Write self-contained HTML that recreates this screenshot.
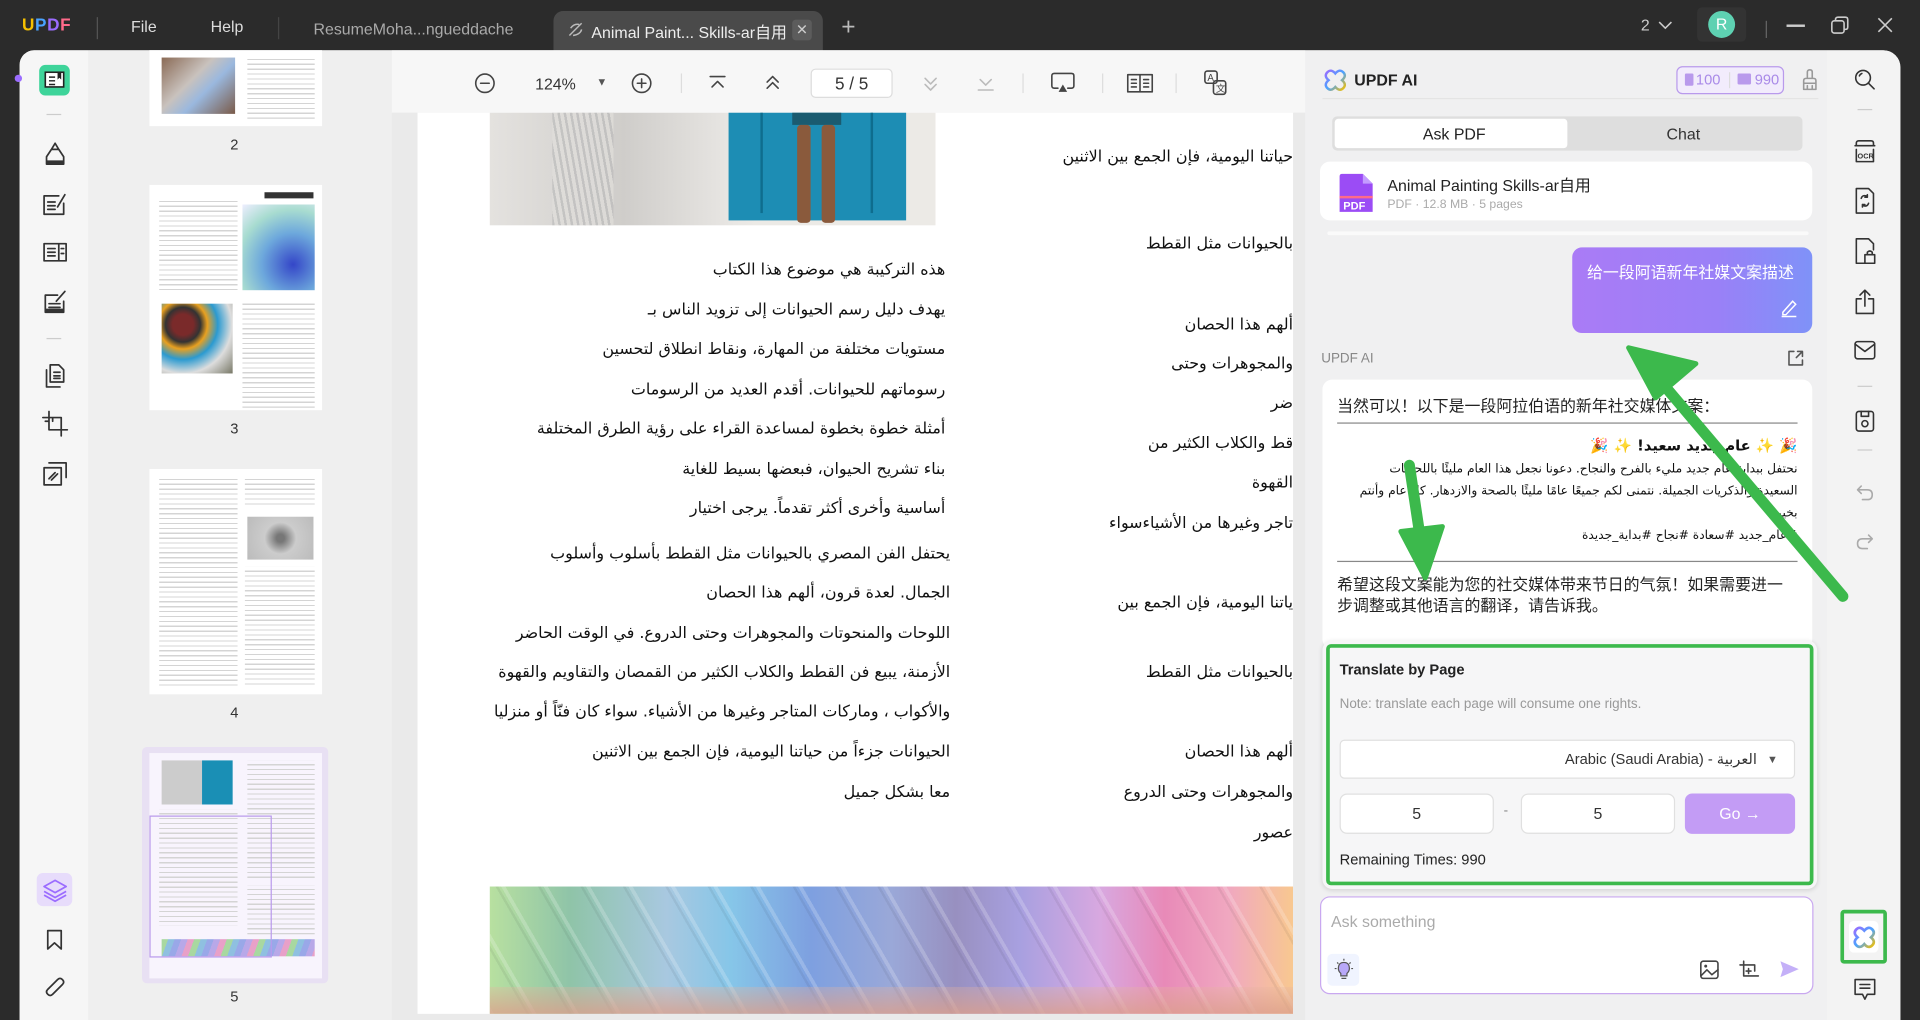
<!DOCTYPE html>
<html><head><meta charset="utf-8"><style>
*{box-sizing:border-box;margin:0;padding:0}
html,body{width:1920px;height:1020px;overflow:hidden;background:#2b2b2b;font-family:"Liberation Sans","Noto Sans CJK SC",sans-serif}
#s{position:absolute;left:0;top:0;width:1568px;height:833px;transform:scale(1.22449);transform-origin:0 0;background:#2b2b2b}
.a{position:absolute}
.t{position:absolute;white-space:nowrap}
svg{position:absolute;overflow:visible}
.ic{fill:none;stroke:#555;stroke-width:1.4;stroke-linecap:round;stroke-linejoin:round}
.ar{font-family:"DejaVu Sans",sans-serif;direction:rtl;font-size:13px;color:#111}
.rt{fill:none;stroke:#666;stroke-width:1.3;stroke-linecap:round;stroke-linejoin:round}
.ln{background:repeating-linear-gradient(#fff 0 3px,#d4d4d4 3px 4px)}
</style></head><body><div id="s">
<div class="t" style="left:18px;top:12px;font-size:14px;font-weight:bold;letter-spacing:0.5px"><span style="color:#f5c000">U</span><span style="color:#4aa3ff">P</span><span style="color:#9b6cff">D</span><span style="color:#ff6a8a">F</span></div>
<div class="a" style="left:79px;top:14px;width:1px;height:18px;background:#555"></div>
<div class="t" style="left:107px;top:14px;font-size:13px;color:#ddd">File</div>
<div class="t" style="left:172px;top:14px;font-size:13px;color:#ddd">Help</div>
<div class="a" style="left:227px;top:14px;width:1px;height:18px;background:#444"></div>
<div class="t" style="left:256px;top:16px;font-size:13px;color:#aaa">ResumeMoha...ngueddache</div>
<div class="a" style="left:452px;top:9px;width:220px;height:33px;background:#4a4a4a;border-radius:8px 8px 0 0"></div>
<svg style="left:463px;top:17px" width="14" height="14"><path d="M2 12 L12 2 M3 6 Q6 2 10 3 M5 12 Q11 11 12 7" stroke="#bbb" fill="none" stroke-width="1.2"/></svg>
<div class="t" style="left:483px;top:16px;font-size:13px;color:#eee">Animal Paint... Skills-ar自用</div>
<div class="a" style="left:647px;top:16px;width:16px;height:17px;background:#5c5c5c;border-radius:3px;color:#ccc;font-size:12px;text-align:center;line-height:17px">✕</div>
<div class="t" style="left:687px;top:11px;font-size:20px;color:#bbb;font-weight:300">+</div>
<div class="t" style="left:1340px;top:13px;font-size:13px;color:#ccc">2</div>
<svg style="left:1354px;top:17px" width="12" height="8"><path d="M1 1 L6 6 L11 1" stroke="#ccc" fill="none" stroke-width="1.3"/></svg>
<div class="a" style="left:1386px;top:6px;width:40px;height:28px;background:#333;border-radius:4px"></div>
<div class="a" style="left:1395px;top:9px;width:22px;height:22px;background:#5ed1b2;border-radius:50%;color:#fff;font-size:13px;text-align:center;line-height:22px">R</div>
<div class="a" style="left:1442px;top:17px;width:1px;height:14px;background:#666"></div>
<div class="a" style="left:1459px;top:20px;width:15px;height:1.5px;background:#ccc"></div>
<svg style="left:1495px;top:13px" width="16" height="16"><rect x="1" y="4" width="10" height="10" rx="2" stroke="#ccc" fill="none" stroke-width="1.3"/><path d="M4 4 V3 Q4 1 6 1 H12 Q14 1 14 3 V9 Q14 11 12 11 H11" stroke="#ccc" fill="none" stroke-width="1.3"/></svg>
<svg style="left:1533px;top:14px" width="13" height="13"><path d="M1 1 L12 12 M12 1 L1 12" stroke="#ccc" stroke-width="1.3"/></svg>

<div class="a" style="left:16px;top:41px;width:1536px;height:792px;background:#f4f4f4;border-radius:12px 14px 0 0;overflow:hidden">
 <div class="a" style="left:0;top:0;width:56px;height:792px;background:#f6f6f6"></div>
 <div class="a" style="left:56px;top:0;width:248px;height:792px;background:#efefef"></div>
 <div class="a" style="left:304px;top:0;width:746px;height:792px;background:#eaeaea"></div>
 <div class="a" style="left:304px;top:0;width:746px;height:51px;background:#f7f7f7"></div>
 <div class="a" style="left:1050px;top:0;width:426px;height:792px;background:#f0f0f1"></div>
 <div class="a" style="left:1476px;top:0;width:60px;height:792px;background:#f3f3f3"></div>
</div>
<div class="a" style="left:12px;top:61px;width:6px;height:6px;border-radius:50%;background:#9b6cff"></div>

<div class="a" style="left:32px;top:53px;width:25px;height:25px;background:#3ed49a;border-radius:5px"></div>
<svg style="left:36px;top:58px" width="17" height="15"><rect x="1" y="1" width="15" height="12" fill="#fff" stroke="#222" stroke-width="1.3"/><path d="M4 5 H9 M4 8 H9 M4 11 H9" stroke="#222" stroke-width="1.2"/><path d="M11 1 V7 L12.5 5.5 L14 7 V1" fill="#222"/></svg>
<div class="a" style="left:38px;top:93px;width:12px;height:1px;background:#ccc"></div>
<div class="a" style="left:38px;top:276px;width:12px;height:1px;background:#ccc"></div>
<svg style="left:33px;top:114px" width="24" height="24"><path class="ic" style="stroke:#333" d="M5 20 V14 L9 8 H15 L19 14 V20 Z M9 8 L12 3 L15 8"/><path d="M5 17 H19 V20 H5Z" fill="#333"/></svg>
<svg style="left:33px;top:155px" width="24" height="24"><path class="ic" style="stroke:#333" d="M3 5 H15 M3 5 V20 H19 V11 M6 10 H12 M6 13 H12 M6 16 H12 M14 14 L20 4"/></svg>
<svg style="left:33px;top:194px" width="24" height="24"><path class="ic" style="stroke:#333" d="M3 5 H21 V19 H3 Z M6 9 H12 M6 12 H12 M6 15 H12 M15 5 V19 M17 9 H19 M17 13 H19"/></svg>
<svg style="left:33px;top:235px" width="24" height="24"><path class="ic" style="stroke:#333" d="M4 6 H14 M4 6 V20 H19 V11 M7 13 H16 M7 16 H16 M13 11 L20 3"/><path d="M4 17 H19 V20 H4Z" fill="#333"/></svg>
<svg style="left:33px;top:295px" width="24" height="24"><path class="ic" style="stroke:#333" d="M8 3 H15 L19 7 V17 H8 Z M5 7 V21 H16 M11 9 H16 M11 12 H16 M11 14 H16"/></svg>
<svg style="left:33px;top:334px" width="24" height="24"><path class="ic" style="stroke:#333" d="M7 2 V17 H22 M2 7 H17 V22 M10 7 V10 M7 10 H4"/></svg>
<svg style="left:33px;top:375px" width="24" height="24"><path class="ic" style="stroke:#333" d="M7 3 H21 V15 M3 7 H17 V21 H3 Z M7 16 L12 11 M9 17 L14 12"/></svg>
<div class="a" style="left:30px;top:713px;width:29px;height:27px;background:#e7dcfb;border-radius:5px"></div>
<svg style="left:34px;top:716px" width="22" height="22"><path d="M11 3 L20 8 L11 13 L2 8 Z M2 12 L11 17 L20 12 M2 15 L11 20 L20 15" fill="none" stroke="#9b6cff" stroke-width="1.4" stroke-linejoin="round"/></svg>
<svg style="left:37px;top:759px" width="16" height="18"><path class="ic" style="stroke:#333" d="M2 1 H13 V16 L7.5 11 L2 16 Z"/></svg>
<svg style="left:35px;top:798px" width="20" height="20"><path class="ic" style="stroke:#333" d="M15 7 L8 14 Q6 16 4 14 Q2 12 4 10 L12 2 Q14 0 16 2 Q18 4 16 6 L8 14"/></svg>

<div class="a" style="left:122px;top:41px;width:141px;height:62px;background:#fff;overflow:hidden">
 <div class="a" style="left:10px;top:6px;width:60px;height:46px;background:linear-gradient(135deg,#8a6a55,#c9c2bd 40%,#9ab8de 60%,#7a5a48)"></div>
 <div class="a ln" style="left:80px;top:4px;width:55px;height:52px"></div>
</div>
<div class="t" style="left:188px;top:111px;font-size:12px;color:#333">2</div>
<div class="a" style="left:122px;top:151px;width:141px;height:184px;background:#fff;overflow:hidden">
 <div class="a" style="left:94px;top:6px;width:40px;height:5px;background:#333"></div>
 <div class="a" style="left:76px;top:16px;width:59px;height:70px;background:radial-gradient(circle at 70% 70%,#3446c8,#6da8dc 40%,#a8dcd0 70%,#eef 100%)"></div>
 <div class="a ln" style="left:8px;top:10px;width:64px;height:78px"></div>
 <div class="a" style="left:10px;top:97px;width:58px;height:57px;background:radial-gradient(circle at 30% 30%,#7a2a2a 15%,#333 25%,#e8a020 35%,#2b9ad0 50%,#ddd 70%,#776 100%)"></div>
 <div class="a ln" style="left:76px;top:94px;width:59px;height:88px"></div>
</div>
<div class="t" style="left:188px;top:343px;font-size:12px;color:#333">3</div>
<div class="a" style="left:122px;top:383px;width:141px;height:184px;background:#fff;overflow:hidden">
 <div class="a ln" style="left:8px;top:5px;width:64px;height:172px"></div>
 <div class="a ln" style="left:78px;top:5px;width:57px;height:25px"></div>
 <div class="a" style="left:80px;top:39px;width:54px;height:35px;background:radial-gradient(circle,#777 10%,#ccc 40%,#bbb)"></div>
 <div class="a ln" style="left:78px;top:80px;width:57px;height:97px"></div>
</div>
<div class="t" style="left:188px;top:575px;font-size:12px;color:#333">4</div>
<div class="a" style="left:116px;top:610px;width:152px;height:193px;background:#e8e0f3;border-radius:4px"></div>
<div class="a" style="left:122px;top:615px;width:141px;height:184px;background:#f8f4fd;overflow:hidden">
 <div class="a" style="left:10px;top:6px;width:33px;height:36px;background:#ccc"></div>
 <div class="a" style="left:43px;top:6px;width:25px;height:36px;background:#1a8fb5"></div>
 <div class="a" style="left:80px;top:6px;width:55px;height:98px;background:repeating-linear-gradient(#f8f4fd 0 3px,#d4d4d4 3px 4px)"></div>
 <div class="a" style="left:8px;top:46px;width:64px;height:95px;background:repeating-linear-gradient(#f8f4fd 0 3px,#d4d4d4 3px 4px)"></div>
 <div class="a" style="left:80px;top:108px;width:55px;height:40px;background:repeating-linear-gradient(#f8f4fd 0 3px,#d4d4d4 3px 4px)"></div>
 <div class="a" style="left:10px;top:152px;width:125px;height:14px;background:repeating-linear-gradient(110deg,#a8d8a0 0 5px,#8fc0e0 5px 10px,#99a8e8 10px 15px,#b8a8e8 15px 20px,#e8a0c8 20px 25px)"></div>
 <div class="a" style="left:0;top:51px;width:100px;height:116px;border:1px solid #b99aec"></div>
</div>
<div class="t" style="left:188px;top:807px;font-size:12px;color:#333">5</div>

<svg style="left:387px;top:59px" width="18" height="18"><circle class="rt" style="stroke:#444" cx="9" cy="9" r="7.5"/><path class="rt" style="stroke:#444" d="M5.5 9 H12.5"/></svg>
<div class="t" style="left:437px;top:61px;font-size:13px;color:#333">124%</div>
<div class="t" style="left:487px;top:62px;font-size:9px;color:#555">▼</div>
<svg style="left:515px;top:59px" width="18" height="18"><circle class="rt" style="stroke:#444" cx="9" cy="9" r="7.5"/><path class="rt" style="stroke:#444" d="M5.5 9 H12.5 M9 5.5 V12.5"/></svg>
<div class="a" style="left:556px;top:60px;width:1px;height:16px;background:#ddd"></div>
<svg style="left:579px;top:61px" width="14" height="14"><path class="rt" style="stroke:#444" d="M1 1.5 H13 M2.5 10 L7 5.5 L11.5 10"/></svg>
<svg style="left:624px;top:60px" width="14" height="16"><path class="rt" style="stroke:#444" d="M2.5 7 L7 2.5 L11.5 7 M2.5 12 L7 7.5 L11.5 12"/></svg>
<div class="a" style="left:662px;top:56px;width:67px;height:24px;background:#fff;border:1px solid #ddd;border-radius:4px;text-align:center;font-size:14px;line-height:22px;color:#333">5 / 5</div>
<svg style="left:753px;top:60px" width="14" height="16"><path class="rt" style="stroke:#bbb" d="M2.5 4 L7 8.5 L11.5 4 M2.5 9 L7 13.5 L11.5 9"/></svg>
<svg style="left:798px;top:61px" width="14" height="14"><path class="rt" style="stroke:#bbb" d="M1 12.5 H13 M2.5 4 L7 8.5 L11.5 4"/></svg>
<div class="a" style="left:835px;top:60px;width:1px;height:16px;background:#ddd"></div>
<svg style="left:858px;top:59px" width="20" height="18"><path class="rt" style="stroke:#444" d="M6 13 H3 Q1 13 1 11 V3 Q1 1 3 1 H17 Q19 1 19 3 V11 Q19 13 17 13 H14"/><path d="M10 10 L13.5 16 H6.5Z" fill="#444"/></svg>
<div class="a" style="left:900px;top:60px;width:1px;height:16px;background:#ddd"></div>
<svg style="left:920px;top:59px" width="22" height="18"><path class="rt" style="stroke:#444" d="M1 2 H21 V16 H1 Z M11 2 V16 M4 6 H8 M4 9 H8 M4 12 H8 M14 6 H18 M14 9 H18 M14 12 H18"/></svg>
<div class="a" style="left:960px;top:60px;width:1px;height:16px;background:#ddd"></div>
<svg style="left:983px;top:57px" width="20" height="22"><rect class="rt" style="stroke:#444" x="1" y="1" width="10" height="10" rx="2"/><rect class="rt" style="stroke:#444" x="8" y="9" width="10" height="11" rx="2" fill="#f7f7f7"/><text x="3" y="9" font-size="8" fill="#444" font-family="Liberation Sans">A</text><text x="10" y="18" font-size="8" fill="#444" font-family="Noto Sans CJK SC">文</text></svg>

<div class="a" style="left:341px;top:92px;width:715px;height:736px;background:#fff;overflow:hidden">
 <div class="a" style="left:59px;top:0;width:364px;height:92px;background:linear-gradient(90deg,#e4e2df,#cfcdca 30%,#e9e7e4 55%,#eceae6 60%)"></div>
 <div class="a" style="left:110px;top:0;width:50px;height:92px;background:repeating-linear-gradient(80deg,#bbb 0 2px,#e0dedb 2px 5px);opacity:.7"></div>
 <div class="a" style="left:254px;top:0;width:145px;height:88px;background:#1d8db4"></div>
 <div class="a" style="left:280px;top:0;width:2px;height:82px;background:#0e6d8e"></div>
 <div class="a" style="left:370px;top:0;width:2px;height:82px;background:#0e6d8e"></div>
 <div class="a" style="left:306px;top:0;width:40px;height:10px;background:#1a5b70"></div>
 <div class="a" style="left:310px;top:10px;width:11px;height:80px;background:#8a5a3c;border-radius:3px"></div>
 <div class="a" style="left:330px;top:10px;width:11px;height:80px;background:#8a5a3c;border-radius:3px"></div>
 <div class="a" style="left:59px;top:632px;width:656px;height:104px;background:linear-gradient(90deg,#b8e0a0 0%,#8fc4a8 10%,#a8c8e0 22%,#86c6e8 30%,#7ea0e0 40%,#9aa8d8 50%,#9890c0 58%,#a8a0e0 66%,#d8a8e0 76%,#e88ab8 84%,#f0a8c0 92%,#f8c890 100%)"></div>
 <div class="a" style="left:59px;top:632px;width:656px;height:104px;background:repeating-linear-gradient(60deg,rgba(255,255,255,.2) 0 3px,rgba(0,0,0,0) 3px 26px,rgba(0,0,0,.06) 26px 28px,rgba(0,0,0,0) 28px 30px)"></div>
 <div class="a" style="left:59px;top:714px;width:656px;height:22px;background:linear-gradient(rgba(230,180,160,.3),rgba(220,160,140,.8))"></div>
</div>
<div class="a" style="left:341px;top:92px;width:715px;height:736px;overflow:hidden">
 <div class="ar t" style="right:284px;top:121px">هذه التركيبة هي موضوع هذا الكتاب</div>
 <div class="ar t" style="right:284px;top:154px">يهدف دليل رسم الحيوانات إلى تزويد الناس بـ</div>
 <div class="ar t" style="right:284px;top:186px">مستويات مختلفة من المهارة، ونقاط انطلاق لتحسين</div>
 <div class="ar t" style="right:284px;top:219px">رسوماتهم للحيوانات. أقدم العديد من الرسومات</div>
 <div class="ar t" style="right:284px;top:251px">أمثلة خطوة بخطوة لمساعدة القراء على رؤية الطرق المختلفة</div>
 <div class="ar t" style="right:284px;top:284px">بناء تشريح الحيوان، فبعضها بسيط للغاية</div>
 <div class="ar t" style="right:284px;top:316px">أساسية وأخرى أكثر تقدماً. يرجى اختيار</div>
 <div class="ar t" style="right:280px;top:353px">يحتفل الفن المصري بالحيوانات مثل القطط بأسلوب وأسلوب</div>
 <div class="ar t" style="right:280px;top:385px">الجمال. لعدة قرون، ألهم هذا الحصان</div>
 <div class="ar t" style="right:280px;top:418px">اللوحات والمنحوتات والمجوهرات وحتى الدروع. في الوقت الحاضر</div>
 <div class="ar t" style="right:280px;top:450px">الأزمنة، يبيع فن القطط والكلاب الكثير من القمصان والتقاويم والقهوة</div>
 <div class="ar t" style="right:280px;top:482px">والأكواب ، وماركات المتاجر وغيرها من الأشياء. سواء كان فنّاً أو منزليا</div>
 <div class="ar t" style="right:280px;top:515px">الحيوانات جزءاً من حياتنا اليومية، فإن الجمع بين الاثنين</div>
 <div class="ar t" style="right:280px;top:548px">معا بشكل جميل</div>
 <div class="ar t" style="right:0;top:29px">حياتنا اليومية، فإن الجمع بين الاثنين</div>
 <div class="ar t" style="right:0;top:100px">بالحيوانات مثل القطط</div>
 <div class="ar t" style="right:0;top:166px">ألهم هذا الحصان</div>
 <div class="ar t" style="right:0;top:198px">والمجوهرات وحتى</div>
 <div class="ar t" style="right:0;top:230px">ضر</div>
 <div class="ar t" style="right:0;top:263px">قط والكلاب الكثير من</div>
 <div class="ar t" style="right:0;top:295px">القهوة</div>
 <div class="ar t" style="right:0;top:328px">تاجر وغيرها من الأشياءسواء</div>
 <div class="ar t" style="right:0;top:393px">ياتنا اليومية، فإن الجمع بين</div>
 <div class="ar t" style="right:0;top:450px">بالحيوانات مثل القطط</div>
 <div class="ar t" style="right:0;top:515px">ألهم هذا الحصان</div>
 <div class="ar t" style="right:0;top:548px">والمجوهرات وحتى الدروع</div>
 <div class="ar t" style="right:0;top:581px">عصور</div>
</div>

<svg style="left:1081px;top:56px" width="19" height="19"><path d="M9.5 4 Q6 0 3 3 Q0 6 4 9.5 Q0 13 3 16 Q6 19 9.5 15 Q13 19 16 16 Q19 13 15 9.5 Q19 6 16 3 Q13 0 9.5 4Z" fill="none" stroke="url(#g1)" stroke-width="2"/><defs><linearGradient id="g1" x1="0" y1="0" x2="1" y2="1"><stop offset="0" stop-color="#9b6cff"/><stop offset=".5" stop-color="#4aa3ff"/><stop offset="1" stop-color="#f5c000"/></linearGradient></defs></svg>
<div class="t" style="left:1106px;top:58px;font-size:13px;font-weight:bold;color:#222">UPDF AI</div>
<div class="a" style="left:1369px;top:54px;width:88px;height:23px;border:1px solid #b99aec;border-radius:5px;background:#f2ecfc"></div>
<div class="a" style="left:1376px;top:60px;width:7px;height:10px;background:#b99aec;border-radius:1px"></div>
<div class="t" style="left:1385px;top:58px;font-size:12px;color:#a98ae8">100</div>
<div class="a" style="left:1412px;top:59px;width:1px;height:13px;background:#ddd"></div>
<div class="a" style="left:1419px;top:60px;width:11px;height:9px;background:#b99aec;border-radius:1px"></div>
<div class="t" style="left:1433px;top:58px;font-size:12px;color:#a98ae8">990</div>
<svg style="left:1471px;top:56px" width="14" height="18"><path class="rt" style="stroke:#999" d="M5 7 V3 Q5 1 7 1 Q9 1 9 3 V7 M2 17 V10 Q2 8 4 8 H10 Q12 8 12 10 V17 Z M2 12 H12 M5 17 V14 M9 17 V14"/></svg>
<div class="a" style="left:1080px;top:80px;width:405px;height:1px;background:#e4e4e4"></div>
<div class="a" style="left:1088px;top:95px;width:384px;height:28px;background:#dedede;border-radius:4px"></div>
<div class="a" style="left:1090px;top:97px;width:190px;height:24px;background:#fff;border-radius:3px"></div>
<div class="t" style="left:1162px;top:102px;font-size:13px;color:#222">Ask PDF</div>
<div class="t" style="left:1361px;top:102px;font-size:13px;color:#333">Chat</div>
<div class="a" style="left:1078px;top:132px;width:402px;height:48px;background:#fff;border-radius:8px"></div>
<svg style="left:1094px;top:142px" width="27" height="31"><path d="M0 2 Q0 0 2 0 H19 L27 8 V31 H0 Z" fill="#9b4cf5"/><path d="M19 0 V8 H27" fill="#c49cff"/><rect x="0" y="18" width="27" height="2" fill="#ff6a8a"/><text x="3" y="29" font-size="9" font-weight="bold" fill="#fff" font-family="Liberation Sans">PDF</text></svg>
<div class="t" style="left:1133px;top:141px;font-size:13px;color:#222">Animal Painting Skills-ar自用</div>
<div class="t" style="left:1133px;top:162px;font-size:10px;color:#aaa">PDF · 12.8 MB · 5 pages</div>
<div class="a" style="left:1084px;top:189px;width:393px;height:3px;background:#fafafa;border-radius:2px"></div>
<div class="a" style="left:1284px;top:202px;width:196px;height:70px;border-radius:8px;background:linear-gradient(90deg,#aa7bf6,#9a80f7 60%,#7f92f8)"></div>
<div class="t" style="left:1296px;top:212px;font-size:13px;color:#fff">给一段阿语新年社媒文案描述</div>
<svg style="left:1454px;top:244px" width="14" height="15"><path d="M2 11 L10 2 L12.5 4.5 L4.5 13 L2 13 Z M1 14.5 H13" fill="none" stroke="#fff" stroke-width="1.2"/></svg>
<div class="t" style="left:1079px;top:287px;font-size:11px;color:#888">UPDF AI</div>
<svg style="left:1459px;top:285px" width="15" height="15"><path class="rt" style="stroke:#555" d="M6 2 H2 V13 H13 V9 M8 7 L13 2 M9 2 H13 V6"/></svg>
<div class="a" style="left:1080px;top:310px;width:400px;height:220px;background:#fff;border-radius:8px"></div>
<div class="t" style="left:1092px;top:321px;font-size:13px;color:#222">当然可以！以下是一段阿拉伯语的新年社交媒体文案：</div>
<div class="a" style="left:1092px;top:345px;width:376px;height:1px;background:#888"></div>
<div class="ar t" style="right:100px;top:357px;font-size:12px;font-weight:bold">🎉 ✨ عام جديد سعيد! ✨ 🎉</div>
<div class="ar t" style="right:100px;top:378px;font-size:10px;letter-spacing:-0.2px">نحتفل ببداية عام جديد مليء بالفرح والنجاح. دعونا نجعل هذا العام مليئًا باللحظات</div>
<div class="ar t" style="right:100px;top:396px;font-size:10px;letter-spacing:-0.3px">السعيدة والذكريات الجميلة. نتمنى لكم جميعًا عامًا مليئًا بالصحة والازدهار. كل عام وأنتم</div>
<div class="ar t" style="right:100px;top:414px;font-size:10px">بخير</div>
<div class="ar t" style="right:100px;top:432px;font-size:10px">#عام_جديد #سعادة #نجاح #بداية_جديدة</div>
<div class="a" style="left:1092px;top:458px;width:376px;height:1px;background:#888"></div>
<div class="t" style="left:1092px;top:469px;font-size:13px;color:#222;line-height:17px">希望这段文案能为您的社交媒体带来节日的气氛！如果需要进一<br>步调整或其他语言的翻译，请告诉我。</div>
<div class="a" style="left:1080px;top:523px;width:404px;height:203px;background:#f6f6f7;border-radius:8px;box-shadow:0 1px 4px rgba(0,0,0,.12)"></div>
<div class="a" style="left:1083px;top:526px;width:398px;height:197px;border:3.5px solid #3cb94c;border-radius:4px"></div>
<div class="t" style="left:1094px;top:540px;font-size:12px;font-weight:bold;color:#222">Translate by Page</div>
<div class="t" style="left:1094px;top:569px;font-size:11px;color:#999">Note: translate each page will consume one rights.</div>
<div class="a" style="left:1094px;top:604px;width:372px;height:32px;background:#fff;border:1px solid #e0e0e0;border-radius:4px"></div>
<div class="t" style="left:1278px;top:613px;font-size:12px;color:#333">Arabic (Saudi Arabia) - <span style="font-family:'DejaVu Sans',sans-serif">العربية</span></div>
<div class="t" style="left:1443px;top:615px;font-size:9px;color:#555">▼</div>
<div class="a" style="left:1094px;top:648px;width:126px;height:33px;background:#fff;border:1px solid #e0e0e0;border-radius:6px;text-align:center;line-height:31px;font-size:13px;color:#333">5</div>
<div class="t" style="left:1228px;top:656px;font-size:11px;color:#888">-</div>
<div class="a" style="left:1242px;top:648px;width:126px;height:33px;background:#fff;border:1px solid #e0e0e0;border-radius:6px;text-align:center;line-height:31px;font-size:13px;color:#333">5</div>
<div class="a" style="left:1376px;top:648px;width:90px;height:33px;background:#c39cf5;border-radius:6px;text-align:center;line-height:33px;font-size:13px;color:#fff">Go →</div>
<div class="t" style="left:1094px;top:695px;font-size:12px;color:#222">Remaining Times: 990</div>
<div class="a" style="left:1078px;top:732px;width:403px;height:80px;background:#fff;border:1px solid #c9a8f0;border-radius:8px"></div>
<div class="t" style="left:1087px;top:745px;font-size:13px;color:#aaa">Ask something</div>
<div class="a" style="left:1084px;top:779px;width:26px;height:26px;background:#f0f4ff;border-radius:4px"></div>
<svg style="left:1089px;top:783px" width="17" height="18"><path d="M8.5 3 Q13 3 13 8 Q13 10 11 12 V14 H6 V12 Q4 10 4 8 Q4 3 8.5 3Z" fill="#b8a8f8" stroke="#555" stroke-width="1"/><path d="M6.5 16 H10.5 M8.5 0 V1.5 M1 8 H2.5 M14.5 8 H16 M3 3 L4 4 M14 3 L13 4" stroke="#555" stroke-width="1"/></svg>
<svg style="left:1388px;top:784px" width="16" height="16"><rect class="rt" style="stroke:#444" x="1" y="1" width="14" height="14" rx="2"/><path class="rt" style="stroke:#444" d="M1 13 L6 8 L10 12 L15 8"/><circle cx="5" cy="5" r="1.2" fill="#444"/></svg>
<svg style="left:1420px;top:784px" width="17" height="17"><path class="rt" style="stroke:#444" d="M4 1 V13 H16 M1 4 H13 V9 M8 7 V11 M6 9 H10"/></svg>
<svg style="left:1453px;top:784px" width="17" height="15"><path d="M1 1 L16 7.5 L1 14 L3 7.5 Z" fill="#c4b0f8"/></svg>

<svg style="left:1514px;top:56px" width="18" height="18"><circle class="rt" style="stroke:#333" cx="7.5" cy="7.5" r="6"/><path class="rt" style="stroke:#333" d="M12 12 L16.5 16.5 M4.5 6 Q5 4.5 6.5 4"/></svg>
<div class="a" style="left:1517px;top:89px;width:12px;height:1px;background:#ccc"></div>
<svg style="left:1514px;top:114px" width="18" height="20"><path class="rt" style="stroke:#333" d="M2 5 V3 Q2 1 4 1 H14 Q16 1 16 3 V5 M1 5 H17 M2 8 V18 H16 V8"/><text x="3" y="15.5" font-size="6" fill="#333" font-family="Liberation Sans" font-weight="bold">OCR</text></svg>
<svg style="left:1514px;top:153px" width="18" height="22"><path class="rt" style="stroke:#333" d="M2 1 H12 L16 5 V21 H2 Z M6 9 Q7 6 10 7 L11 8 M12 13 Q11 16 8 15 L7 14 M11 6 V8 H9 M7 16 V14 H9"/></svg>
<svg style="left:1514px;top:194px" width="18" height="22"><path class="rt" style="stroke:#333" d="M12 21 H2 V1 H12 L16 5 V10 M9 14 H17 V21 H9 Z M11 14 V12 Q13 10 15 12 V14"/></svg>
<svg style="left:1514px;top:235px" width="18" height="22"><path class="rt" style="stroke:#333" d="M6 9 H2 V21 H16 V9 H12 M9 15 V2 M5 6 L9 2 L13 6"/></svg>
<svg style="left:1514px;top:278px" width="18" height="16"><rect class="rt" style="stroke:#333" x="1" y="1" width="16" height="14" rx="2"/><path class="rt" style="stroke:#333" d="M1 3 L9 9 L17 3"/></svg>
<div class="a" style="left:1517px;top:315px;width:12px;height:1px;background:#ccc"></div>
<svg style="left:1515px;top:335px" width="16" height="18"><rect class="rt" style="stroke:#333" x="1" y="1" width="14" height="16" rx="2"/><circle class="rt" style="stroke:#333" cx="8" cy="11" r="2.5"/><path class="rt" style="stroke:#333" d="M5 1 V5 H11 V1"/></svg>
<div class="a" style="left:1517px;top:367px;width:12px;height:1px;background:#ccc"></div>
<svg style="left:1516px;top:396px" width="14" height="14"><path class="rt" style="stroke:#aaa" d="M4 1 L1 4 L4 7 M1 4 H9 Q13 4 13 8 Q13 12 9 12 H5"/></svg>
<svg style="left:1516px;top:436px" width="14" height="14"><path class="rt" style="stroke:#aaa" d="M10 1 L13 4 L10 7 M13 4 H5 Q1 4 1 8 Q1 12 5 12 H9"/></svg>
<div class="a" style="left:1503px;top:743px;width:38px;height:44px;border:3.5px solid #3cb94c;border-radius:3px"></div>
<div class="a" style="left:1510px;top:752px;width:24px;height:26px;background:#fff;border-radius:4px"></div>
<svg style="left:1513px;top:756px" width="19" height="19"><path d="M9.5 4 Q6 0 3 3 Q0 6 4 9.5 Q0 13 3 16 Q6 19 9.5 15 Q13 19 16 16 Q19 13 15 9.5 Q19 6 16 3 Q13 0 9.5 4Z" fill="none" stroke="url(#g2)" stroke-width="2.2"/><defs><linearGradient id="g2" x1="0" y1="0" x2="1" y2="1"><stop offset="0" stop-color="#9b6cff"/><stop offset=".5" stop-color="#4aa3ff"/><stop offset="1" stop-color="#f5c000"/></linearGradient></defs></svg>
<svg style="left:1514px;top:799px" width="18" height="19"><path class="rt" style="stroke:#333" d="M1 1 H17 V13 H11 L9 17 L7 13 H1 Z M5 5 H13 M5 8 H13"/></svg>

<svg style="left:0;top:0" width="1568" height="833">
 <path d="M1505 487 L1355 310" stroke="#3cb94c" stroke-width="9" stroke-linecap="round"/>
 <path d="M1330 284 L1385 297 L1352 325 Z" fill="#3cb94c" stroke="#3cb94c" stroke-width="4" stroke-linejoin="round"/>
 <path d="M1151 380 L1160 440" stroke="#3cb94c" stroke-width="9" stroke-linecap="round"/>
 <path d="M1164 472 L1144 434 L1178 430 Z" fill="#3cb94c" stroke="#3cb94c" stroke-width="4" stroke-linejoin="round"/>
</svg>
</div></body></html>
